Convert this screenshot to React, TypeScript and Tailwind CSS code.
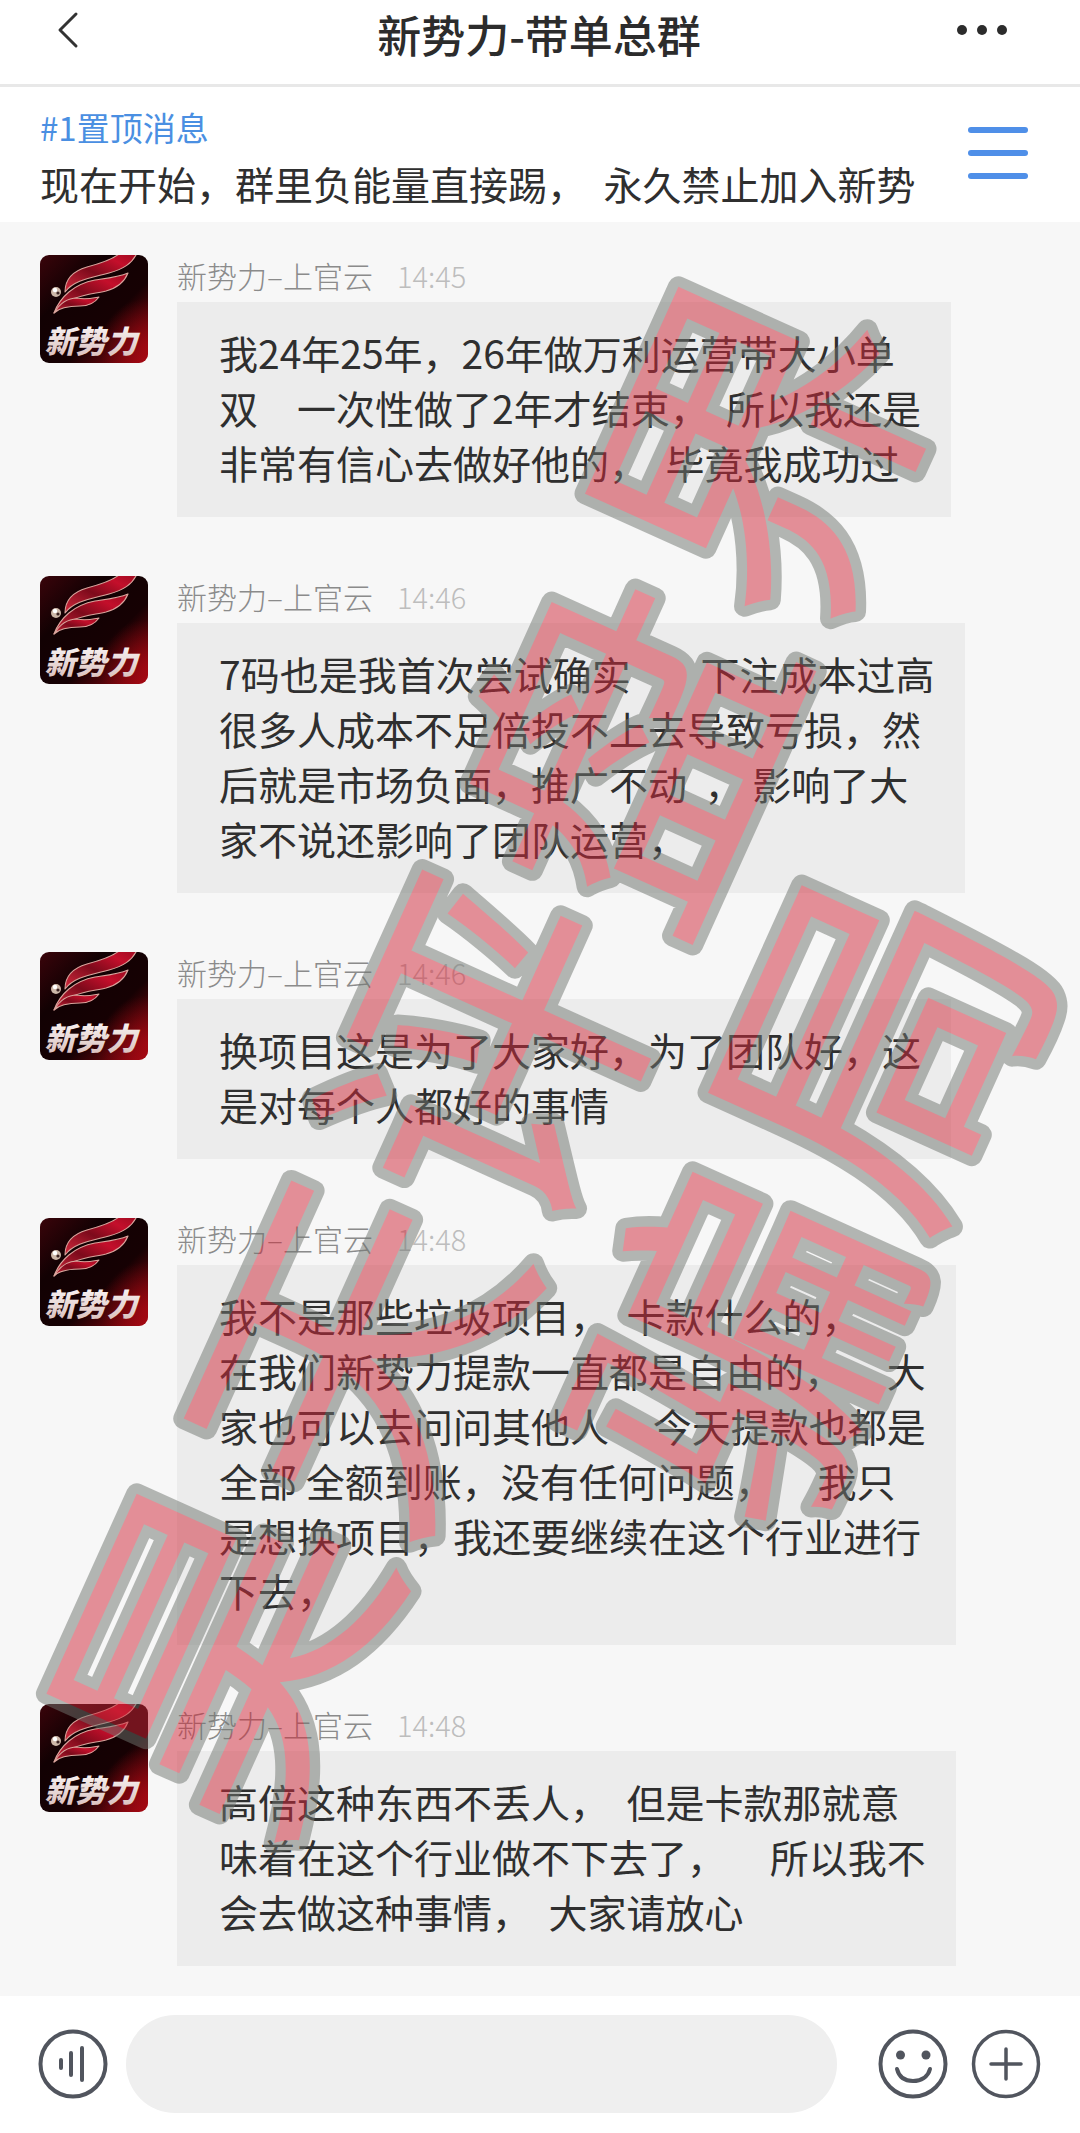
import { useId } from 'react';

type Message = { time: string; lines: string[] };

const messages: Message[] = [
  {
    time: '14:45',
    lines: [
      '我24年25年，26年做万利运营带大小单',
      '双\u3000一次性做了2年才结束，  所以我还是',
      '非常有信心去做好他的，  毕竟我成功过',
    ],
  },
  {
    time: '14:46',
    lines: [
      '7码也是我首次尝试确实        下注成本过高',
      '很多人成本不足倍投不上去导致亏损，然',
      '后就是市场负面，推广不动  ， 影响了大',
      '家不说还影响了团队运营，',
    ],
  },
  {
    time: '14:46',
    lines: ['换项目这是为了大家好，为了团队好，这', '是对每个人都好的事情'],
  },
  {
    time: '14:48',
    lines: [
      '我不是那些垃圾项目，  卡款什么的，',
      '在我们新势力提款一直都是自由的，     大',
      '家也可以去问问其他人     今天提款也都是',
      '全部 全额到账，没有任何问题，     我只',
      '是想换项目，我还要继续在这个行业进行',
      '下去，',
    ],
  },
  {
    time: '14:48',
    lines: [
      '高倍这种东西不丢人，  但是卡款那就意',
      '味着在这个行业做不下去了，     所以我不',
      '会去做这种事情，  大家请放心',
    ],
  },
];

function Avatar() {
  const id = useId();
  const bg = `${id}bg`;
  const wing = `${id}wing`;
  const glow = `${id}glow`;
  const silver = `${id}silver`;
  return (
    <svg viewBox="0 0 108 108" className="h-[108px] w-[108px] shrink-0 rounded-[9px]" role="img" aria-label="新势力">
      <defs>
        <linearGradient id={bg} x1="0" y1="0" x2="1" y2="1">
          <stop offset="0" stopColor="#3a040a" />
          <stop offset="0.3" stopColor="#120103" />
          <stop offset="0.62" stopColor="#160103" />
          <stop offset="1" stopColor="#a00812" />
        </linearGradient>
        <radialGradient id={glow} cx="1" cy="0.85" r="0.45">
          <stop offset="0" stopColor="#b30a14" stopOpacity="0.6" />
          <stop offset="1" stopColor="#b30a14" stopOpacity="0" />
        </radialGradient>
        <linearGradient id={wing} x1="0" y1="1" x2="1" y2="0">
          <stop offset="0" stopColor="#d32a3e" />
          <stop offset="0.45" stopColor="#7d0a1b" />
          <stop offset="0.75" stopColor="#c40f2b" />
          <stop offset="1" stopColor="#9c0b20" />
        </linearGradient>
        <linearGradient id={silver} x1="0" y1="0" x2="0" y2="1">
          <stop offset="0" stopColor="#ffffff" />
          <stop offset="1" stopColor="#d6b9b6" />
        </linearGradient>
      </defs>
      <rect width="108" height="108" fill={`url(#${bg})`} />
      <rect width="108" height="108" fill={`url(#${glow})`} />
      <g fill={`url(#${wing})`} stroke="#d9a49c" strokeWidth="1.1" strokeLinejoin="round">
        <path d="M25 37 C25 24 33 16 47 12 C62 8 74 4 80 -2 L97 -2 C92 9 83 14 69 18 C50 23 34 25 25 37Z" />
        <path d="M14 58 C20 42 34 29 55 25 C69 23 79 22 88 18 C84 28 77 33 66 36 C49 40 29 40 14 58Z" />
        <path d="M14 58 C20 48 27 43 37 43 C46 45 53 43 59 42 C54 49 48 51 40 51 C29 51 20 52 14 58Z" />
      </g>
      <circle cx="16" cy="37" r="5" fill="#cdb7a8" />
      <circle cx="15" cy="35" r="2.2" fill="#ffffff" />
      <circle cx="18" cy="38" r="1.6" fill="#3b2424" />
      <text
        x="51"
        y="98"
        textAnchor="middle"
        fontSize="31"
        fontWeight="900"
        fontStyle="italic"
        fill={`url(#${silver})`}
        fontFamily="'Noto Sans CJK SC', sans-serif"
      >
        新势力
      </text>
    </svg>
  );
}

function MessageRow({ message }: { message: Message }) {
  return (
    <li className="flex items-start gap-[29px]">
      <Avatar />
      <div className="min-w-0">
        <p className="flex h-[47px] items-center pb-[7px] text-[29px] font-light leading-[40px]">
          <span className="text-[30px] text-[#8b8b8b]">新势力–上官云</span>
          <time className="ml-[24px] text-[#bdbdbd]">{message.time}</time>
        </p>
        <p className="w-fit whitespace-pre bg-[#ececec] pb-[27px] pl-[42px] pr-[30px] pt-[23px] text-[39px] leading-[55px] text-[#2f2f2f]">
          {message.lines.join('\n')}
        </p>
      </div>
    </li>
  );
}

function Watermark() {
  return (
    <svg
      viewBox="0 0 1080 2133"
      className="pointer-events-none absolute inset-x-0 top-0 w-full overflow-visible opacity-50"
      aria-hidden="true"
    >
      <g
        transform="rotate(-65.7)"
        fontFamily="'Noto Sans CJK SC', sans-serif"
        fontSize="330"
        fontWeight="400"
        fill="#d02839"
        stroke="#707570"
        strokeWidth="21"
        strokeLinejoin="round"
        paintOrder="stroke"
      >
        <text x="-1581" y="1003">昊天评盘界</text>
        <text x="-1085" y="1355">骗局</text>
      </g>
    </svg>
  );
}

const ring = 'h-[70px] w-[70px]';

export default function App() {
  return (
    <div className="relative flex min-h-screen flex-col overflow-hidden bg-[#f7f7f7] font-['Noto_Sans_CJK_SC',sans-serif]">
      <header className="flex h-[87px] items-start justify-between border-b-[3px] border-[#e8e8e8] bg-white pl-[50px] pr-[66px]">
        <button type="button" aria-label="返回" className="mt-2 w-[78px]">
          <svg viewBox="0 0 36 44" className="h-[44px] w-[36px]" fill="none" stroke="#333" strokeWidth="3">
            <path d="M26 6 L10 22 L26 38" strokeLinecap="round" strokeLinejoin="round" />
          </svg>
        </button>
        <h1 className="pt-1 text-[44px] font-medium leading-[60px] text-[#2c2c2c]">新势力-带单总群</h1>
        <button type="button" aria-label="更多" className="mt-2 flex w-[64px] justify-end">
          <svg viewBox="0 0 60 44" className="h-[44px] w-[60px]" fill="#2c2c2c">
            <circle cx="8" cy="22" r="5" />
            <circle cx="28" cy="22" r="5" />
            <circle cx="48" cy="22" r="5" />
          </svg>
        </button>
      </header>

      <section className="flex items-start justify-between bg-white pb-[11px] pl-[40px] pr-[52px] pt-[12px]">
        <div className="min-w-0">
          <p className="text-[33px] leading-[56px] text-[#4a8fe2]">#1置顶消息</p>
          <p className="whitespace-pre text-[39px] leading-[56px] text-[#2f2f2f]">现在开始，群里负能量直接踢，  永久禁止加入新势</p>
        </div>
        <button type="button" aria-label="菜单" className="mt-[28px] flex w-[60px] flex-col gap-[17px]">
          <span className="h-[6px] w-full rounded-full bg-[#4f8fe8]" />
          <span className="h-[6px] w-full rounded-full bg-[#4f8fe8]" />
          <span className="h-[6px] w-full rounded-full bg-[#4f8fe8]" />
        </button>
      </section>

      <main className="flex-1">
        <ul className="flex flex-col gap-[59px] pb-[30px] pl-[40px] pt-[33px]">
          {messages.map((m, i) => (
            <MessageRow key={i} message={m} />
          ))}
        </ul>
      </main>

      <footer className="flex items-center bg-white pb-5 pl-[38px] pr-[39px] pt-[19px]">
        <button type="button" aria-label="语音">
          <svg viewBox="0 0 70 70" className={ring} fill="none" stroke="#51555e" strokeWidth="4" strokeLinecap="round">
            <circle cx="35" cy="35" r="32.5" />
            <path d="M23 31V39M33 24V46M44 19V51" />
          </svg>
        </button>
        <input
          type="text"
          aria-label="消息"
          className="ml-[18px] mr-[41px] h-[98px] min-w-0 flex-1 rounded-full bg-[#efefef] px-10 text-[39px] outline-none"
        />
        <button type="button" aria-label="表情">
          <svg viewBox="0 0 70 70" className={ring} fill="none" stroke="#51555e" strokeWidth="4" strokeLinecap="round">
            <circle cx="35" cy="35" r="32.5" />
            <path d="M19 40C21 48 27 52 35 52S50 48 52 40" />
            <circle cx="22.5" cy="26" r="4.5" fill="#51555e" stroke="none" />
            <circle cx="48" cy="26" r="4.5" fill="#51555e" stroke="none" />
          </svg>
        </button>
        <button type="button" aria-label="添加" className="ml-[23px]">
          <svg viewBox="0 0 70 70" className={ring} fill="none" stroke="#51555e" strokeWidth="3.5" strokeLinecap="round">
            <circle cx="35" cy="35" r="32.5" />
            <path d="M35 20V50M20 35H50" />
          </svg>
        </button>
      </footer>

      <Watermark />
    </div>
  );
}
